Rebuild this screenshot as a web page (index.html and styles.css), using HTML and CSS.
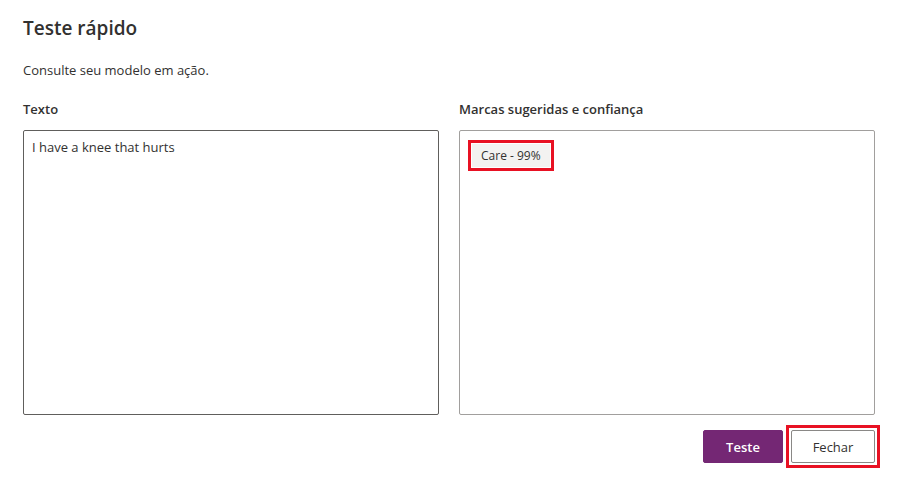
FILE: index.html
```html
<!DOCTYPE html>
<html lang="pt">
<head>
<meta charset="utf-8">
<link rel="stylesheet" href="styles.css">
</head>
<body>
<div class="panel">
  <h1 class="title">Teste rápido</h1>
  <p class="subtitle">Consulte seu modelo em ação.</p>
  <div class="columns">
    <div class="col">
      <div class="label">Texto</div>
      <div class="box box-input">I have a knee that hurts</div>
    </div>
    <div class="col">
      <div class="label">Marcas sugeridas e confiança</div>
      <div class="box box-output">
        <span class="chip">Care - 99%</span>
      </div>
    </div>
  </div>
  <div class="actions">
    <button class="btn btn-primary">Teste</button>
    <span class="annot"><button class="btn btn-default">Fechar</button></span>
  </div>
</div>
</body>
</html>
```
FILE: styles.css
```css
html, body {
  margin: 0;
  padding: 0;
  background: #ffffff;
}
body {
  font-family: "Open Sans", "Noto Sans", sans-serif;
  color: #323130;
}
.panel {
  width: 852px;
  padding: 14px 0 0 23px;
}
.title {
  margin: 0;
  font-size: 19px;
  font-weight: 600;
  line-height: 28px;
  color: #323130;
}
.subtitle {
  margin: 19px 0 0 0;
  font-size: 13px;
  line-height: 18px;
}
.columns {
  display: flex;
  gap: 20px;
  margin-top: 21px;
}
.col {
  width: 416px;
  display: flex;
  flex-direction: column;
}
.label {
  font-size: 13px;
  font-weight: 600;
  line-height: 18px;
  margin-bottom: 12px;
}
.box {
  height: 285px;
  box-sizing: border-box;
  border-radius: 2px;
  background: #fff;
}
.box-input {
  border: 1px solid #605e5c;
  padding: 6px 8px;
  font-size: 13px;
  line-height: 20px;
}
.box-output {
  border: 1px solid #a19f9d;
  padding: 12px 12px;
}
.chip {
  display: inline-block;
  background: #f3f2f1;
  font-size: 12px;
  line-height: 23px;
  padding: 0 9px;
  outline: 3px solid #e81123;
  outline-offset: 1px;
  color: #323130;
}
.actions {
  display: flex;
  justify-content: flex-end;
  align-items: center;
  gap: 3px;
  margin-top: 10px;
  margin-right: -5px;
}
.annot {
  display: inline-flex;
  border: 3px solid #e81123;
  padding: 2px;
}
.btn {
  font-family: "Open Sans", "Noto Sans", sans-serif;
  font-size: 13px;
  font-weight: 600;
  height: 33px;
  box-sizing: border-box;
  border-radius: 2px;
  cursor: pointer;
}
.btn-primary {
  width: 80px;
  background: #742774;
  color: #fff;
  border: 1px solid #742774;
}
.btn-default {
  width: 84px;
  background: #fff;
  color: #323130;
  border: 1px solid #8a8886;
  font-weight: 500;
}
```
